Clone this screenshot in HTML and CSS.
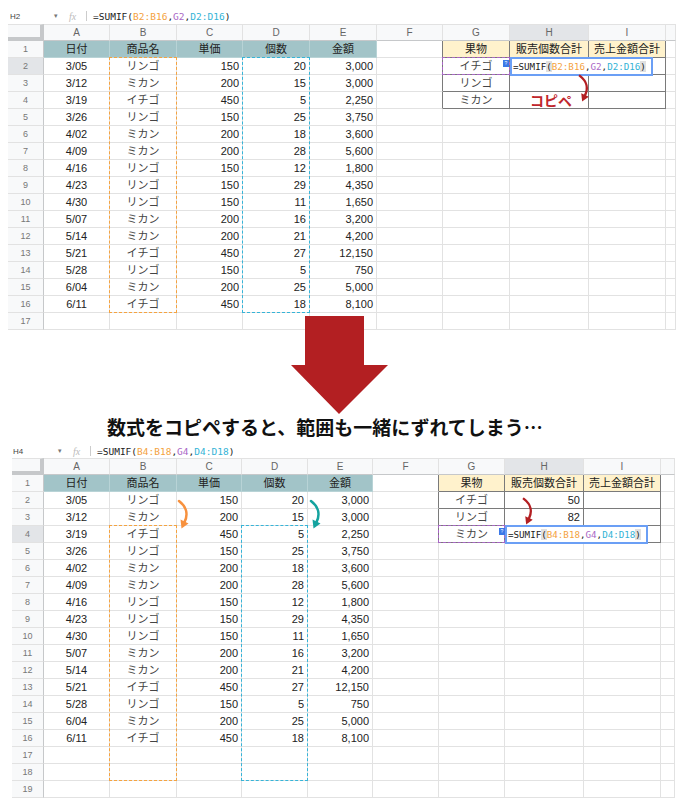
FILE: index.html
```html
<!DOCTYPE html>
<html lang="ja">
<head>
    <meta charset="UTF-8">
    <meta name="viewport" content="width=device-width, initial-scale=1.0">
    <title>SUMIF コピペ</title>
    <link rel="stylesheet" href="styles.css">
</head>
<body>

<svg width="0" height="0" class="defs">
    <symbol id="curl" viewBox="0 0 16 30">
        <path d="M3 2 C 11 8, 12 16, 8.5 23" fill="none" stroke="currentColor" stroke-width="2.6" stroke-linecap="round"/>
        <polygon points="12.5,24.5 4.5,20.5 5.5,29.5" fill="currentColor"/>
    </symbol>
</svg>

<!-- 上：元の数式 -->
<div class="sheet sheet-top">
    <div class="fbar">
        <span class="namebox">H2</span>
        <span class="caret">▾</span>
        <span class="fx">fx</span>
        <span class="sep"></span>
        <span class="formula">=SUMIF(<b class="ref-b">B2:B16</b>,<b class="ref-g">G2</b>,<b class="ref-d">D2:D16</b>)</span>
    </div>
    <div class="grid" id="gridTop">
        <div class="range range-orange range-b"></div>
        <div class="range range-teal range-d"></div>
        <div class="range range-purple range-g"></div>
        <div class="tab">?</div>
        <div class="editor">=SUMIF<span class="paren">(</span><b class="ref-b">B2:B16</b>,<b class="ref-g">G2</b>,<b class="ref-d">D2:D16</b><span class="paren">)</span></div>
        <svg class="curl curl-red"><use href="#curl"/></svg>
        <span class="copipe">コピペ</span>
    </div>
</div>

<svg class="down-arrow" width="97" height="98" viewBox="0 0 97 98">
    <polygon points="14,0 73,0 73,49 97,49 48,98 0,49 14,49" fill="#b31f22"/>
</svg>

<p class="caption">数式をコピペすると、範囲も一緒にずれてしまう…</p>

<!-- 下：コピペ後 -->
<div class="sheet sheet-bottom">
    <div class="fbar">
        <span class="namebox">H4</span>
        <span class="caret">▾</span>
        <span class="fx">fx</span>
        <span class="sep"></span>
        <span class="formula">=SUMIF(<b class="ref-b">B4:B18</b>,<b class="ref-g">G4</b>,<b class="ref-d">D4:D18</b>)</span>
    </div>
    <div class="grid" id="gridBottom">
        <div class="range range-orange range-b"></div>
        <div class="range range-teal range-d"></div>
        <div class="range range-purple range-g"></div>
        <div class="tab">?</div>
        <div class="editor">=SUMIF<span class="paren">(</span><b class="ref-b">B4:B18</b>,<b class="ref-g">G4</b>,<b class="ref-d">D4:D18</b><span class="paren">)</span></div>
        <svg class="curl curl-red"><use href="#curl"/></svg>
        <svg class="curl curl-orange"><use href="#curl"/></svg>
        <svg class="curl curl-teal"><use href="#curl"/></svg>
    </div>
</div>

<script>
    // 売上データ
    const rows = [
        ['3/05', 'リンゴ', 150, 20, '3,000'],
        ['3/12', 'ミカン', 200, 15, '3,000'],
        ['3/19', 'イチゴ', 450, 5, '2,250'],
        ['3/26', 'リンゴ', 150, 25, '3,750'],
        ['4/02', 'ミカン', 200, 18, '3,600'],
        ['4/09', 'ミカン', 200, 28, '5,600'],
        ['4/16', 'リンゴ', 150, 12, '1,800'],
        ['4/23', 'リンゴ', 150, 29, '4,350'],
        ['4/30', 'リンゴ', 150, 11, '1,650'],
        ['5/07', 'ミカン', 200, 16, '3,200'],
        ['5/14', 'ミカン', 200, 21, '4,200'],
        ['5/21', 'イチゴ', 450, 27, '12,150'],
        ['5/28', 'リンゴ', 150, 5, '750'],
        ['6/04', 'ミカン', 200, 25, '5,000'],
        ['6/11', 'イチゴ', 450, 18, '8,100']
    ];
    const letters = ['A', 'B', 'C', 'D', 'E', 'F', 'G', 'H', 'I', ''];
    const heads = ['日付', '商品名', '単価', '個数', '金額'];
    const sumHeads = ['果物', '販売個数合計', '売上金額合計'];
    const fruits = ['イチゴ', 'リンゴ', 'ミカン'];

    function cell(grid, text, cls) {
        const div = document.createElement('div');
        div.className = 'cell ' + (cls || '');
        div.textContent = text;
        grid.appendChild(div);
    }

    function buildSheet(grid, rowCount, selRow, hValues) {
        cell(grid, '', 'corner');
        letters.forEach((l, i) => cell(grid, l, 'colhead' + (i === 7 ? ' sel' : '')));

        for (let r = 1; r <= rowCount; r++) {
            cell(grid, r, 'rownum' + (r === selRow ? ' sel' : ''));
            for (let c = 0; c < 10; c++) {
                let text = '';
                let cls = '';
                if (r === 1) {
                    if (c < 5) { text = heads[c]; cls = 'th c'; }
                    if (c >= 6 && c <= 8) { text = sumHeads[c - 6]; cls = 'yh c box'; }
                } else if (r <= 16) {
                    const d = rows[r - 2];
                    if (c === 0) { text = d[0]; cls = 'c'; }
                    if (c === 1) { text = d[1]; cls = 'c kana'; }
                    if (c >= 2 && c <= 4) { text = d[c]; cls = 'r'; }
                    if (r <= 4 && c === 6) { text = fruits[r - 2]; cls = 'c box kana'; }
                    if (r <= 4 && c === 7) { text = hValues[r - 2]; cls = 'r box'; }
                    if (r <= 4 && c === 8) { cls = 'box'; }
                }
                if (c === 5 && r <= 4) cls += ' box-edge';
                cell(grid, text, cls);
            }
        }
    }

    buildSheet(document.getElementById('gridTop'), 17, 2, ['', '', '']);
    buildSheet(document.getElementById('gridBottom'), 19, 4, ['50', '82', '']);
</script>

</body>
</html>
```

FILE: styles.css
```css
* {
    box-sizing: border-box;
}

body {
    margin: 0;
    background: #fff;
    color: #222;
    font-family: "Liberation Sans", "Noto Sans CJK JP", sans-serif;
}

.defs {
    position: absolute;
}

/* シート */
.sheet-top {
    padding: 8px 0 0 8px;
}

.sheet-bottom {
    padding: 4px 0 0 12px;
}

.fbar {
    display: flex;
    align-items: center;
    height: 16px;
    font-size: 8px;
    color: #444;
}

.sheet-bottom .fbar {
    height: 14px;
}

.namebox {
    width: 46px;
    padding-left: 2px;
}

.sheet-bottom .namebox {
    width: 46px;
    padding-left: 1px;
}

.caret {
    width: 15px;
    font-size: 7px;
    color: #777;
}

.fx {
    width: 17px;
    font-family: "Liberation Serif", serif;
    font-style: italic;
    font-size: 10px;
    color: #bbb;
}

.sep {
    width: 1px;
    height: 10px;
    background: #ccc;
    margin-right: 6px;
}

.formula {
    font-family: "DejaVu Sans Mono", monospace;
    font-size: 9.5px;
    color: #222;
}

.formula b,
.editor b {
    font-weight: normal;
}

.ref-b { color: #f4a23e; }
.ref-g { color: #a968c6; }
.ref-d { color: #33b3d6; }

.grid {
    position: relative;
    display: grid;
    grid-auto-rows: 17px;
}

.sheet-top .grid {
    grid-template-columns: 36px 66px 67px 66px 67px 67px 66px 67px 79px 77px 10px;
}

.sheet-bottom .grid {
    grid-template-columns: 32px 66px 67px 65px 66px 65px 66px 66px 79px 77px 14px;
}

.cell {
    border-right: 1px solid #e2e2e2;
    border-bottom: 1px solid #e2e2e2;
    padding: 0 3px;
    font-size: 11px;
    line-height: 16px;
    white-space: nowrap;
    overflow: hidden;
}

.c { text-align: center; }
.r { text-align: right; }

.kana {
    color: #444;
}

.corner {
    background: #f8f9fa;
    border-top: 1px solid #e2e2e2;
    border-right: 4px solid #c6c8ca;
    border-bottom: 4px solid #c6c8ca;
}

.colhead {
    background: #f8f9fa;
    border-top: 1px solid #e2e2e2;
    border-bottom-color: #c6c8ca;
    text-align: center;
    font-size: 10px;
    color: #666;
}

.rownum {
    background: #f8f9fa;
    border-right-color: #c6c8ca;
    text-align: center;
    font-size: 9px;
    color: #777;
}

.colhead.sel,
.rownum.sel {
    background: #e3e5e8;
}

.th {
    background: #a2c4c8;
    border-right-color: #b8d3d6;
    border-bottom-color: #b8d3d6;
    color: #222;
}

.yh {
    background: #fff2cc;
}

.box {
    border-right-color: #7a7a7a;
    border-bottom-color: #7a7a7a;
}

.box-edge {
    border-right-color: #7a7a7a;
}

/* 参照範囲・編集中セル */
.range {
    position: absolute;
    border: 1px dashed;
}

.range-orange { border-color: #f5a340; }
.range-teal { border-color: #36b4d8; }
.range-purple { border-color: #a866c5; }

.editor {
    position: absolute;
    height: 19px;
    width: 143px;
    padding: 0 1px;
    background: #fff;
    border: 2px solid #6b9ff5;
    font-family: "DejaVu Sans Mono", monospace;
    font-size: 9.2px;
    line-height: 15px;
    color: #222;
    white-space: nowrap;
    overflow: hidden;
}

.paren {
    background: #e0e0e0;
}

.tab {
    position: absolute;
    width: 6px;
    height: 7px;
    background: #3b78e7;
    color: #fff;
    font-size: 5px;
    line-height: 7px;
    text-align: center;
}

.curl {
    position: absolute;
    width: 16px;
    height: 30px;
}

.curl-red { color: #b31f22; }
.curl-orange { color: #f7913e; }
.curl-teal { color: #14a39f; }

.copipe {
    position: absolute;
    left: 522px;
    top: 68px;
    font-family: "Noto Sans CJK JP", sans-serif;
    font-weight: bold;
    font-size: 14px;
    line-height: 16px;
    color: #c0262c;
}

.sheet-top .range-b { left: 101px; top: 33px; width: 68px; height: 256px; }
.sheet-top .range-d { left: 234px; top: 33px; width: 68px; height: 256px; }
.sheet-top .range-g { left: 434px; top: 33px; width: 68px; height: 18px; }
.sheet-top .editor { left: 502px; top: 33px; }
.sheet-top .tab { left: 495px; top: 36px; }
.sheet-top .curl-red { left: 569px; top: 50px; width: 15px; height: 28px; }

.sheet-bottom .range-b { left: 97px; top: 67px; width: 68px; height: 256px; }
.sheet-bottom .range-d { left: 229px; top: 67px; width: 67px; height: 256px; }
.sheet-bottom .range-g { left: 426px; top: 67px; width: 67px; height: 18px; }
.sheet-bottom .editor { left: 493px; top: 67px; }
.sheet-bottom .tab { left: 487px; top: 70px; }
.sheet-bottom .curl-red { left: 509px; top: 39px; width: 15px; height: 28px; }
.sheet-bottom .curl-orange { left: 164px; top: 41px; }
.sheet-bottom .curl-teal { left: 296px; top: 41px; }

/* 中央の矢印と説明 */
.down-arrow {
    position: relative;
    display: block;
    margin: -14px 0 0 291px;
}

.caption {
    margin: 0;
    padding-left: 107px;
    font-family: "Noto Sans CJK JP", sans-serif;
    font-weight: bold;
    font-size: 19px;
    line-height: 26px;
    color: #111;
}
```
